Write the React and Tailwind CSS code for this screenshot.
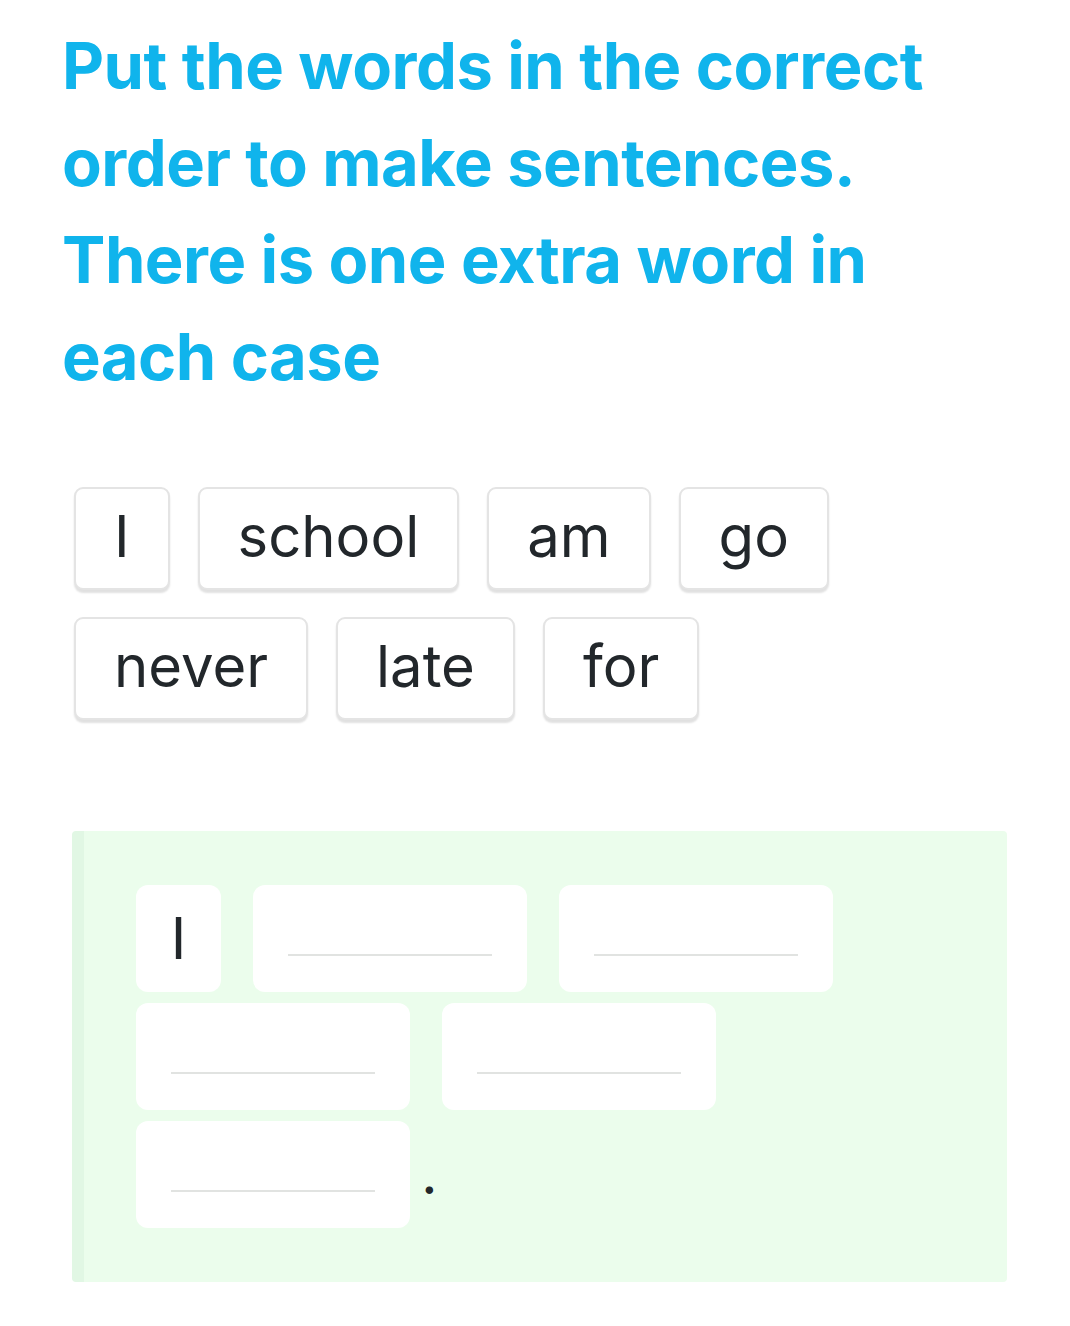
import React from "react";

const words = ["I", "school", "am", "go", "never", "late", "for"];

const Chip = ({ word }) => (
  <div className="h-[103px] px-[38px] flex items-center justify-center bg-white border-2 border-[#e4e4e4] rounded-[9px] shadow-[0_3px_2px_rgba(0,0,0,0.12)] text-[58px] leading-none text-[#22272b] font-['Inter',sans-serif]">
    <span className="-mt-[6px]">{word}</span>
  </div>
);

const Slot = ({ w = "w-[274px]", children }) => (
  <div className={`${w} h-[107px] bg-white rounded-[12px] flex items-center justify-center`}>
    {children}
  </div>
);

const Blank = () => (
  <Slot>
    <div className="w-[204px] h-[2px] bg-[#e1e3e1] mt-[32px]" />
  </Slot>
);

export default function App() {
  return (
    <div className="min-h-[1326px] bg-white pl-[62px] pr-[62px] pt-[17px]">
      <h1 className="text-[#10b4ec] font-bold text-[65px] leading-[97px] tracking-[-0.5px] font-['Inter',sans-serif] max-w-[940px]">
        Put the words in the correct
        <br />
        order to make sentences.
        <br />
        There is one extra word in
        <br />
        each case
      </h1>

      <div className="mt-[82px] ml-[12px] flex gap-x-[28px]">
        {words.slice(0, 4).map((w) => (
          <Chip key={w} word={w} />
        ))}
      </div>
      <div className="mt-[27px] ml-[12px] flex gap-x-[28px]">
        {words.slice(4).map((w) => (
          <Chip key={w} word={w} />
        ))}
      </div>

      <div className="mt-[111px] ml-[10px] w-[935px] h-[451px] bg-[#ebfdec] border-l-[12px] border-[#e1f7e4] rounded-[4px] pl-[52px] pt-[54px] flex flex-col gap-[11px]">
        <div className="flex gap-[32px]">
          <Slot w="w-[85px]">
            <span className="text-[58px] leading-none text-[#22272b] font-['Inter',sans-serif] -mt-[2px]">I</span>
          </Slot>
          <Blank />
          <Blank />
        </div>
        <div className="flex gap-[32px]">
          <Blank />
          <Blank />
        </div>
        <div className="flex items-center gap-[12px]">
          <Blank />
          <span className="text-[44px] leading-none font-bold text-[#22272b] font-['Inter',sans-serif] mt-[6px]">.</span>
        </div>
      </div>
    </div>
  );
}
